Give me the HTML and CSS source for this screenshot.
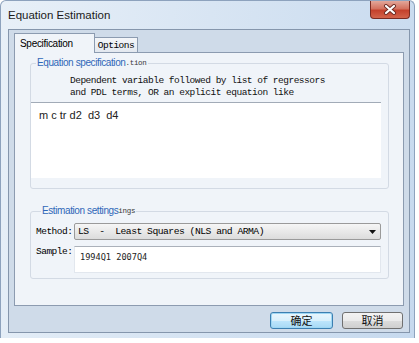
FILE: index.html
```html
<!DOCTYPE html>
<html lang="en">
<head>
    <meta charset="UTF-8">
    <title>Equation Estimation</title>
    <link rel="stylesheet" href="styles.css">
</head>
<body>
    <div class="window">
        <div class="titlebar">
            <span class="title">Equation Estimation</span>
            <div class="close">
                <svg width="14" height="11" viewBox="0 0 14 11">
                    <path d="M3 2 L11 9 M11 2 L3 9" stroke="#6b2a22" stroke-width="4" stroke-linecap="round"/>
                    <path d="M3 2 L11 9 M11 2 L3 9" stroke="#ffffff" stroke-width="2.2" stroke-linecap="round"/>
                </svg>
            </div>
        </div>

        <div class="client">
            <div class="tabs">
                <div class="tab active">Specification</div>
                <div class="tab mono">Options</div>
            </div>

            <div class="panel">
                <fieldset class="group group-eq">
                    <legend>Equation specification<span class="ghost">.tion</span></legend>
                    <p class="hint mono">Dependent variable followed by list of regressors<br>and PDL terms, OR an explicit equation like</p>
                    <div class="editor">m c tr d2&nbsp; d3&nbsp; d4</div>
                </fieldset>

                <fieldset class="group group-est">
                    <legend>Estimation settings<span class="ghost">ings</span></legend>
                    <div class="row">
                        <label class="mono">Method:</label>
                        <div class="select mono">
                            <span>LS&nbsp; -&nbsp; Least Squares (NLS and ARMA)</span>
                            <svg width="7" height="4" viewBox="0 0 7 4"><path d="M0 0 H7 L3.5 4 Z" fill="#111"/></svg>
                        </div>
                    </div>
                    <div class="row row-sample">
                        <label class="mono">Sample:</label>
                        <div class="input">1994Q1 2007Q4</div>
                    </div>
                </fieldset>
            </div>

            <div class="buttons">
                <div class="btn btn-default">确定</div>
                <div class="btn">取消</div>
            </div>
        </div>
    </div>
</body>
</html>
```

FILE: styles.css
```css
body {
    margin: 0;
    background: #ffffff;
    font-family: "Liberation Sans", Arial, sans-serif;
    color: #000;
}

.mono {
    font-family: "Liberation Mono", "Courier New", monospace;
    font-size: 9.5px;
    letter-spacing: -0.5px;
}

.window {
    width: 415px;
    height: 338px;
    box-sizing: border-box;
    border: 1px solid #8da2bd;
    border-bottom: none;
    border-radius: 6px 6px 0 0;
    padding: 0 4px 5px 7px;
    background: linear-gradient(100deg, #e8f0f8 0%, #d8e5f3 45%, #c6d9ee 100%);
    display: flex;
    flex-direction: column;
}

.titlebar {
    height: 28px;
    display: flex;
    justify-content: space-between;
    align-items: flex-start;
}

.title {
    font-size: 11.5px;
    line-height: 28px;
    color: #1b1b1b;
}

.close {
    width: 40px;
    height: 18px;
    box-sizing: border-box;
    border: 1px solid #7a2b22;
    border-top: none;
    border-radius: 0 0 4px 4px;
    background: linear-gradient(#e3a79a 0%, #d4725f 45%, #c4412c 55%, #d2634b 100%);
    display: flex;
    align-items: center;
    justify-content: center;
}

.client {
    flex: 1;
    border: 1px solid #8596ac;
    background: #cfdbe9;
    padding: 3px 5px 0 5px;
    display: flex;
    flex-direction: column;
}

.tabs {
    height: 19px;
    display: flex;
    align-items: flex-end;
    position: relative;
    z-index: 1;
}

.tab {
    box-sizing: border-box;
    height: 15px;
    width: 43px;
    border: 1px solid #8c9bb0;
    border-bottom: none;
    border-left: none;
    background: linear-gradient(#f4f6f9, #e3e8ef);
    text-align: center;
    line-height: 15px;
}

.tab.active {
    width: 81px;
    height: 20px;
    margin-bottom: -1px;
    border-left: 1px solid #8c9bb0;
    background: #f0f4f9;
    font-size: 10px;
    letter-spacing: -0.3px;
    line-height: 20px;
    text-align: left;
    padding-left: 5px;
}

.panel {
    height: 254px;
    box-sizing: border-box;
    border: 1px solid #8c9bb0;
    background: #f0f4f9;
    padding: 0 14px 0 15px;
    display: flex;
    flex-direction: column;
}

.group {
    margin: 0;
    padding: 0;
    border: 1px solid #d3dae4;
    border-radius: 3px;
}

.group legend {
    margin-left: 5px;
    padding: 0 1px;
    font-size: 10px;
    letter-spacing: -0.4px;
    line-height: 13px;
    color: #2f67b8;
}

.ghost {
    font-family: "Liberation Mono", monospace;
    font-size: 7.5px;
    letter-spacing: -0.3px;
    color: #3a3a3a;
    vertical-align: 1px;
}

.group-eq {
    margin-top: 3px;
    padding-bottom: 10px;
}

.hint {
    margin: 5px 0 0 39px;
    line-height: 12px;
    color: #111;
}

.editor {
    margin: 3px 7px 0 0;
    height: 76px;
    box-sizing: border-box;
    background: #ffffff;
    border-top: 1px solid #a2abb7;
    padding: 6px 8px;
    font-size: 11px;
    line-height: 13px;
    color: #222;
}

.group-est {
    margin-top: 15px;
    padding: 0 7px 5px 5px;
}

.row {
    display: flex;
    margin-top: 5px;
}

.row label {
    width: 38px;
    line-height: 17px;
}

.row-sample {
    margin-top: 6px;
}

.row-sample label {
    line-height: 12px;
}

.select {
    flex: 1;
    height: 17px;
    box-sizing: border-box;
    border: 1px solid #9a9a9a;
    border-radius: 2px;
    background: linear-gradient(#f6f6f6, #dcdcdc);
    padding: 0 4px 0 3px;
    display: flex;
    align-items: center;
    justify-content: space-between;
    font-size: 9.7px;
}

.input {
    flex: 1;
    height: 27px;
    box-sizing: border-box;
    background: #ffffff;
    border: 1px solid #e2e7ee;
    border-top-color: #abb1ba;
    padding: 5px 5px 0 5px;
    font-family: "DejaVu Sans Mono", monospace;
    font-size: 8.6px;
    color: #222;
}

.buttons {
    display: flex;
    justify-content: flex-end;
    gap: 9px;
    margin-top: 6px;
    padding-right: 1px;
}

.btn {
    width: 61px;
    height: 17px;
    box-sizing: border-box;
    border: 1px solid #707070;
    border-radius: 3px;
    background: linear-gradient(#f3f3f3 0%, #ebebeb 50%, #dddddd 51%, #cfcfcf 100%);
    font-family: "Noto Sans CJK SC", sans-serif;
    font-size: 11px;
    line-height: 15px;
    text-align: center;
    color: #111;
}

.btn-default {
    width: 63px;
    border-color: #3c7fb1;
    box-shadow: inset 0 0 0 1px #9fd7f4;
    background: linear-gradient(#eaf6fd 0%, #d9f0fc 50%, #bee6fd 51%, #a7d9f5 100%);
}
```
